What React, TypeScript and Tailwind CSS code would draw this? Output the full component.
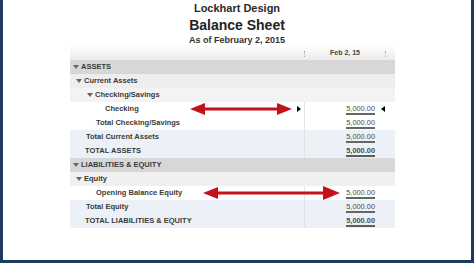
import React from "react";

type Row = {
    label: string;
    indent: number;
    caret?: boolean;
    bg: string;
    value?: string;
    kind?: "single" | "double";
};

const ROWS: Row[] = [
    { label: "ASSETS", indent: 3, caret: true, bg: "bg-[#d7d7d7]" },
    { label: "Current Assets", indent: 6, caret: true, bg: "bg-[#eeeeee]" },
    { label: "Checking/Savings", indent: 17, caret: true, bg: "bg-[#f3f3f3]" },
    { label: "Checking", indent: 35, bg: "bg-white", value: "5,000.00", kind: "single" },
    { label: "Total Checking/Savings", indent: 26, bg: "bg-white", value: "5,000.00", kind: "single" },
    { label: "Total Current Assets", indent: 16, bg: "bg-[#ecf1f7]", value: "5,000.00", kind: "single" },
    { label: "TOTAL ASSETS", indent: 15, bg: "bg-[#ecf1f7]", value: "5,000.00", kind: "double" },
    { label: "LIABILITIES & EQUITY", indent: 3, caret: true, bg: "bg-[#d7d7d7]" },
    { label: "Equity", indent: 6, caret: true, bg: "bg-[#f0f0f0]" },
    { label: "Opening Balance Equity", indent: 26, bg: "bg-white", value: "5,000.00", kind: "single" },
    { label: "Total Equity", indent: 16, bg: "bg-[#ecf1f7]", value: "5,000.00", kind: "single" },
    { label: "TOTAL LIABILITIES & EQUITY", indent: 15, bg: "bg-[#ecf1f7]", value: "5,000.00", kind: "double" },
];

function Arrow({ width }: { width: number }) {
    return (
        <svg width={width} height={14} viewBox={`0 0 ${width} 14`}>
            <line x1={12} y1={7} x2={width - 12} y2={7} stroke="#c4121b" strokeWidth={3} />
            <polygon points={`0,7 15,1 15,13`} fill="#c4121b" />
            <polygon points={`${width},7 ${width - 15},1 ${width - 15},13`} fill="#c4121b" />
        </svg>
    );
}

function RightArrow({ width }: { width: number }) {
    return (
        <svg width={width} height={14} viewBox={`0 0 ${width} 14`}>
            <line x1={12} y1={7} x2={width - 12} y2={7} stroke="#c4121b" strokeWidth={3} />
            <polygon points={`0,7 15,1 15,13`} fill="#c4121b" />
            <polygon points={`${width},7 ${width - 17},0 ${width - 17},14`} fill="#c4121b" />
        </svg>
    );
}

function Caret() {
    return <span className="w-0 h-0 border-l-[3px] border-r-[3px] border-t-[4px] border-l-transparent border-r-transparent border-t-[#666] mr-[2px]" />;
}

function Amount({ value, total }: { value: string; total?: boolean }) {
    return (
        <div className="flex flex-col items-stretch">
            <span className={`text-[7.4px] leading-[9px] text-[#4b4b4b] ${total ? "font-bold" : ""}`}>{value}</span>
            {total ? (
                <div className="h-[2px] bg-[#5c5c5c]" />
            ) : (
                <div className="h-[1.5px] bg-[#666666]" />
            )}
        </div>
    );
}

export default function App() {
    return (
        <div
            className="w-[474px] h-[263px] bg-white border-l-[3px] border-r-[3px] border-b-[3px] border-[#1d3a5c] flex flex-col overflow-hidden text-[#333]"
            style={{ fontFamily: '"Liberation Sans", Arial, sans-serif' }}
        >
            {/* Title */}
            <div className="flex flex-col items-center leading-none pt-[3px]">
                <div className="text-[11px] font-bold text-[#2a2a2a]">Lockhart Design</div>
                <div className="text-[14px] font-bold text-[#222] mt-[4px]">Balance Sheet</div>
                <div className="text-[9px] font-bold text-[#333] mt-[4px]">As of February 2, 2015</div>
            </div>

            {/* Report table */}
            <div className="w-[325px] mt-[2px] ml-[67px]">
                <div className="h-[13px] flex bg-gradient-to-b from-[#fbfbfb] to-[#ececec]">
                    <div className="w-[235px] relative">
                        <div className="absolute right-0 top-[4px] h-[6px] border-l border-dotted border-[#aaa]" />
                    </div>
                    <div className="w-[80px] flex items-center justify-center text-[7px] font-bold text-[#444]">Feb 2, 15</div>
                    <div className="w-[10px] relative">
                        <div className="absolute left-0 top-[4px] h-[6px] border-l border-dotted border-[#aaa]" />
                    </div>
                </div>

                {ROWS.map((r, i) => (
                    <div key={i} className={`h-[14px] flex relative ${r.bg}`}>
                        <div
                            className={`w-[235px] flex items-center text-[7.5px] font-bold text-[#3a3a3a] ${r.value ? "border-r border-[#e4e4e4]" : ""}`}
                            style={{ paddingLeft: r.indent }}
                        >
                            {r.caret && <Caret />}
                            {r.label}
                        </div>
                        <div className="w-[90px] flex items-center justify-end pr-[20px] pt-[1px]">
                            {r.value && <Amount value={r.value} total={r.kind === "double"} />}
                        </div>
                        {r.label === "Checking" && (
                            <>
                                <span className="absolute left-[227px] top-[4px] w-0 h-0 border-t-[3px] border-b-[3px] border-l-[4px] border-t-transparent border-b-transparent border-l-black" />
                                <span className="absolute left-[311px] top-[4px] w-0 h-0 border-t-[3px] border-b-[3px] border-r-[4px] border-t-transparent border-b-transparent border-r-black" />
                                <div className="absolute left-[120px] top-0">
                                    <Arrow width={102} />
                                </div>
                            </>
                        )}
                        {r.label === "Opening Balance Equity" && (
                            <div className="absolute left-[133px] top-0">
                                <RightArrow width={137} />
                            </div>
                        )}
                    </div>
                ))}
            </div>
        </div>
    );
}
